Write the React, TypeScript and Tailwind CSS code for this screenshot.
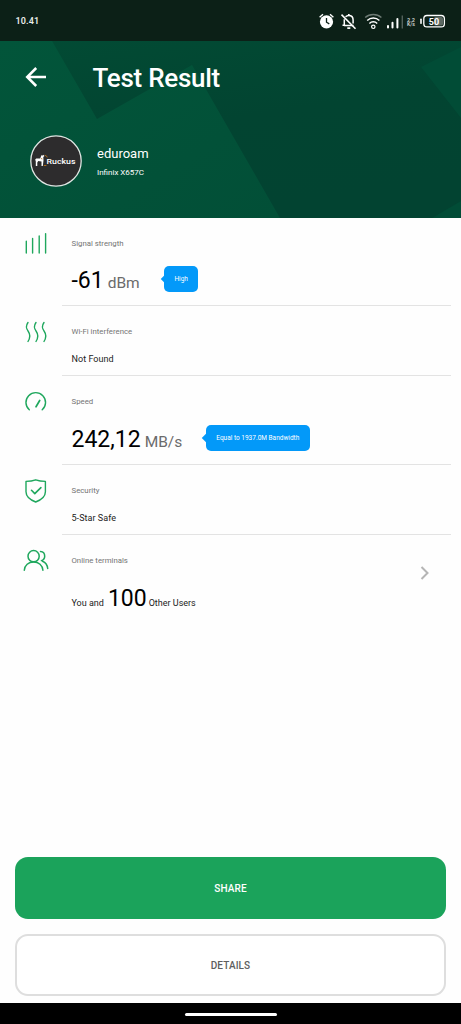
import type { ReactNode } from "react";

const GREEN = "#1fa75d";

function StatusBar() {
  return (
    <div className="h-[41px] bg-[#0c2017] flex items-center justify-between pl-[15.5px] pr-[15px] text-white">
      <span className="text-[9px] leading-[12px] font-semibold tracking-[0.1px] text-[#e8ece9]">10.41</span>
      <svg width="128" height="20" viewBox="318 10 128 20" fill="none">
        {/* alarm */}
        <circle cx="326.5" cy="20.8" r="6.6" fill="#fff" />
        <path d="M319.6 16.2l3.4-2.9M333.4 16.2l-3.4-2.9" stroke="#fff" strokeWidth="1.4" />
        <path d="M326.5 17v4.2l2.8 1.7" stroke="#0c2017" strokeWidth="1.3" />
        {/* muted bell */}
        <path d="M345.6 15.8c.8-.9 1.7-1.4 3.2-1.4 2.9 0 4.300 2.300 4.300 4.700v3.400M344.300 18.300v6h-1.800M344 24.400h9.500" stroke="#fff" strokeWidth="1.5" />
        <path d="M348.8 13v1.6M347.3 27.1h3" stroke="#fff" strokeWidth="1.7" />
        <path d="M341.5 13.6l14 14.2" stroke="#fff" strokeWidth="1.5" />
        {/* wifi */}
        <path d="M365.2 16.6c4.6-4.2 11.6-4.2 16.2 0" stroke="#6d7a74" strokeWidth="1.4" />
        <path d="M367.2 19.4c3.4-3.3 8.8-3.3 12.2 0M369.4 22.4c2.2-2.2 5.6-2.2 7.8 0" stroke="#fff" strokeWidth="1.4" />
        <circle cx="373.3" cy="25.8" r="1.7" stroke="#fff" strokeWidth="1.2" />
        {/* mobile signal */}
        <path d="M388 26.4v-1.4M392.500 26.400v-4.600M397.400 26.400v-8.400" stroke="#fff" strokeWidth="2" strokeLinecap="round" />
        <path d="M402.300 27.400V14.500" stroke="#52605a" strokeWidth="1.4" />
        <text x="407" y="20.5" fill="#c5cac7" fontSize="5" fontWeight="700" textLength="8" lengthAdjust="spacingAndGlyphs">2.2</text>
        <text x="407" y="25.2" fill="#c5cac7" fontSize="5" fontWeight="700" textLength="8" lengthAdjust="spacingAndGlyphs">K/s</text>
        {/* battery */}
        <rect x="420.2" y="17.5" width="1.6" height="5.5" rx=".7" fill="#fff" />
        <rect x="423.8" y="14.500" width="20.600" height="11.400" rx="3.200" stroke="#fff" strokeWidth="1.3" />
        <rect x="434" y="16" width="9" height="8.400" rx="1.5" fill="#5d6963" />
        <text x="434" y="23.600" textAnchor="middle" fill="#fff" fontSize="9" fontWeight="700">50</text>
      </svg>
    </div>
  );
}

function HeaderBackground() {
  return (
    <svg className="absolute inset-0" width="461" height="177" viewBox="0 41 461 177">
      <defs>
        <linearGradient id="dark" x1="0" y1="0" x2="0.4" y2="1">
          <stop offset="0" stopColor="#024b34" />
          <stop offset="0.55" stopColor="#024431" />
          <stop offset="1" stopColor="#024331" />
        </linearGradient>
        <linearGradient id="light" x1="0" y1="0" x2="1" y2="1">
          <stop offset="0" stopColor="#02553a" />
          <stop offset="1" stopColor="#024f37" />
        </linearGradient>
      </defs>
      <rect x="0" y="41" width="461" height="177" fill="url(#dark)" />
      <path d="M0 41H52L97 119L192 65L280 218H0Z" fill="url(#light)" />
      <path d="M421 67L461 47V118Z" fill="#014c36" />
      <path d="M432 218L461 201V218Z" fill="#014c36" />
    </svg>
  );
}

function RuckusLogo() {
  return (
    <svg width="52" height="52" viewBox="0 0 52 52">
      <circle cx="26" cy="26" r="25.2" fill="#2d2c2d" stroke="#dfe5e2" strokeWidth="1.3" />
      <path d="M5.2 24.6l1-1.100h4l1.200-3.200 1.600.2 1-.8.3 1.500-1 .9.2 3.200-.7 5.700h-1.300v-4.600l-3.200-.4-1 1.600v3.500H5.800v-4.600z" fill="#fff" />
      <path d="M14.800 20.300l1.800.8.6 1.300M13.800 30.500h2.600M11 23.500l1.400.5" stroke="#b9731e" strokeWidth=".9" fill="none" />
      <text x="16.500" y="28.500" fill="#fff" fontSize="7.500" fontWeight="500" textLength="29" lengthAdjust="spacingAndGlyphs">
        Ruckus
      </text>
    </svg>
  );
}

function Header() {
  return (
    <header className="relative h-[176.5px] shrink-0 overflow-hidden text-white">
      <HeaderBackground />
      <div className="relative">
        <div className="flex items-center h-[74px] pl-[25px]">
          <svg width="22" height="20" viewBox="0 0 22 20" fill="none" stroke="#fff" strokeWidth="2.5" className="-mt-[2px]">
            <path d="M21 10H2.500M11.200 1L2.200 10l9 9" />
          </svg>
          <h1 className="ml-[45.5px] text-[26px] font-medium tracking-[-0.28px]">Test Result</h1>
        </div>
        <div className="flex items-center pl-[30px] pt-[20px]">
          <RuckusLogo />
          <div className="ml-[15px] pt-[4px]">
            <p className="text-[13px] leading-[19px]">eduroam</p>
            <p className="text-[8px] leading-[19px]">Infinix X657C</p>
          </div>
        </div>
      </div>
    </header>
  );
}

function Bubble({ children, className }: { children: ReactNode; className: string }) {
  return (
    <div className={`relative h-[26px] rounded-[5px] bg-[#0399f9] text-white flex items-center justify-center whitespace-nowrap ${className}`}>
      <span className="absolute -left-[2.5px] top-[10px] size-[6px] rotate-45 bg-[#0399f9]" />
      <span className="pt-[2px]">{children}</span>
    </div>
  );
}

function Row({ icon, label, height, last, children }: { icon: ReactNode; label: string; height: string; last?: boolean; children: ReactNode }) {
  return (
    <div className={`flex ${height}`}>
      <div className="w-[62px] pt-[10px] pl-[20px]">{icon}</div>
      <div className={`relative flex-1 mr-[10px] pl-[9.5px] pt-[21px] ${last ? "" : "border-b-[1.5px] border-[#e3e3e3]"}`}>
        <p className="text-[7.8px] leading-[10px] text-[#747474]">{label}</p>
        {children}
      </div>
    </div>
  );
}

const iconProps = { width: 32, height: 32, fill: "none", stroke: GREEN, strokeLinecap: "round" as const, strokeLinejoin: "round" as const };

export default function App() {
  return (
    <div className="w-[461px] h-[1024px] bg-[#fefefe] flex flex-col overflow-hidden font-['Roboto',sans-serif]">
      <StatusBar />
      <Header />

      <main className="flex-1 pt-[0.5px]">
        <Row
          label="Signal strength"
          height="h-[88px]"
          icon={
            <svg {...iconProps} viewBox="20 228 32 32" strokeWidth="1.4">
              <path d="M26.3 241.3V253M32.6 238.5V253M39.2 236V253M45.6 233.6V253" />
            </svg>
          }
        >
          <div className="flex items-center h-[26px] mt-[17px]">
            <span className="text-[23px] text-black pt-[5px]">-61</span>
            <span className="text-[15.5px] text-[#6b6b6b] ml-[4px] mt-[9px]">dBm</span>
            <Bubble className="w-[34px] ml-[24.5px] text-[6.5px]">High</Bubble>
          </div>
        </Row>

        <Row
          label="Wi-Fi interference"
          height="h-[70px]"
          icon={
            <svg {...iconProps} viewBox="20 316 32 32" strokeWidth="1.4">
              <path d="M28 322.5c-3 4-1.5 6.500 .3 9s2.500 5.500-.3 10M36 322.500c-3 4-1.500 6.500 .3 9s2.500 5.500-.3 10M44 322.500c-3 4-1.500 6.500 .3 9s2.500 5.500-.3 10" />
            </svg>
          }
        >
          <p className="mt-[16px] text-[9px] leading-[12px] tracking-[0.05px] text-[#222]">Not Found</p>
        </Row>

        <Row
          label="Speed"
          height="h-[89px]"
          icon={
            <svg {...iconProps} viewBox="20 386 32 32" strokeWidth="1.4">
              <path d="M29.300 409.800A9.800 9.800 0 1 1 42.200 409.800" />
              <path d="M36 406.800L39.700 400.500" strokeWidth="1.7" />
            </svg>
          }
        >
          <div className="flex items-center h-[26px] mt-[18px]">
            <span className="text-[23px] text-black pt-[5px]">242,12</span>
            <span className="text-[15.5px] text-[#6b6b6b] ml-[4px] mt-[9px]">MB/s</span>
            <Bubble className="w-[104px] ml-[23.5px] text-[6.5px]">Equal to 1937.0M Bandwidth</Bubble>
          </div>
        </Row>

        <Row
          label="Security"
          height="h-[70px]"
          icon={
            <svg {...iconProps} viewBox="20 475 32 32" strokeWidth="1.4">
              <path d="M26 481.400c3.500-.1 6.600-.5 9.700-1.600 3.100 1.100 6.200 1.500 9.700 1.600v10.300c0 5.200-4.600 8.300-9.700 10.300-5.100-2-9.700-5.100-9.700-10.300z" />
              <path d="M31.500 490.300l3.300 3.300 6.100-6" strokeWidth="1.6" />
            </svg>
          }
        >
          <p className="mt-[16px] text-[9px] leading-[12px] tracking-[0.05px] text-[#222]">5-Star Safe</p>
        </Row>

        <Row
          label="Online terminals"
          height="h-[90px]"
          last
          icon={
            <svg {...iconProps} viewBox="20 545 32 32" strokeWidth="1.5">
              <circle cx="33.600" cy="556.200" r="5.600" />
              <path d="M24.300 570.300c.3-5 4.200-8.300 9.300-8.300s9 3.300 9.300 8.300M40.500 551.600c2.600.2 4.200 2.200 4.200 4.600 0 2.100-1.300 3.800-3.300 4.400M42.500 561.200c3 1.200 4.900 3.700 5.200 7.300" />
            </svg>
          }
        >
          <div className="flex items-baseline mt-[16px] text-[9px] text-[#222]">
            <span>You and</span>
            <span className="text-[23px] text-black ml-[4px] mr-[2px]">100</span>
            <span>Other Users</span>
          </div>
          <svg className="absolute right-[21px] top-[31px]" width="10" height="14" viewBox="0 0 10 14" fill="none" stroke="#b5b5b5" strokeWidth="2">
            <path d="M1.500 1l6 6-6 6" />
          </svg>
        </Row>
      </main>

      <div className="flex flex-col gap-[15px] px-[15px] pb-[7px]">
        <button className="h-[62px] rounded-[13px] bg-[#1ba35b] text-white text-[10px] font-medium tracking-[0.1px]">SHARE</button>
        <button className="h-[62px] rounded-[13px] border-2 border-[#dedede] bg-white text-[#5e5e5e] text-[10px] font-medium tracking-[0.1px]">DETAILS</button>
      </div>

      <div className="h-[21px] bg-black flex items-center justify-center pt-[2px]">
        <div className="w-[92px] h-[3px] rounded-full bg-white" />
      </div>
    </div>
  );
}
